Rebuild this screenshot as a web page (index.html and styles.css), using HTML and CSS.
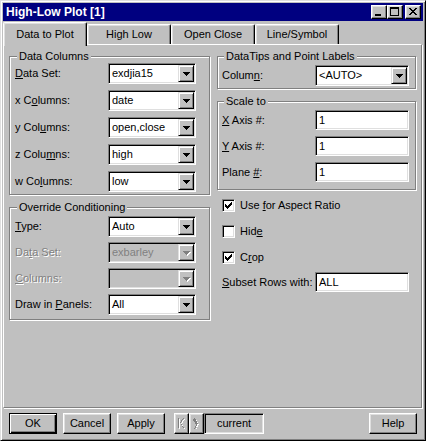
FILE: index.html
```html
<!DOCTYPE html>
<html>
<head>
<meta charset="utf-8">
<title>High-Low Plot [1]</title>
<link rel="stylesheet" href="styles.css">
</head>
<body>
<div class="window">
  <div class="titlebar">
    <span class="title">High-Low Plot [1]</span>
    <div class="caption-btns">
      <span class="cbtn"><svg width="14" height="12" viewBox="0 0 14 12"><rect x="3" y="8" width="6" height="2" fill="#000"/></svg></span>
      <span class="cbtn"><svg width="14" height="12" viewBox="0 0 14 12" shape-rendering="crispEdges"><rect x="2" y="1" width="9" height="2" fill="#000"/><rect x="2" y="1" width="1" height="9" fill="#000"/><rect x="10" y="1" width="1" height="9" fill="#000"/><rect x="2" y="9" width="9" height="1" fill="#000"/></svg></span>
      <span class="cbtn close"><svg width="14" height="12" viewBox="0 0 14 12" shape-rendering="crispEdges"><path fill="#000" d="M3 2h2v1h1v1h2v-1h1v-1h2v1h-1v1h-1v1h-1v1h1v1h1v1h1v1h-2v-1h-1v-1h-2v1h-1v1h-2v-1h1v-1h1v-1h1v-1h-1v-1h-1v-1h-1z"/></svg></span>
    </div>
  </div>

  <div class="tabs">
    <div class="tab active">Data to Plot</div>
    <div class="tab">High Low</div>
    <div class="tab">Open Close</div>
    <div class="tab">Line/Symbol</div>
  </div>

  <div class="panel">
    <div class="col col-left">
      <fieldset class="group g-data">
        <legend>Data Columns</legend>
        <div class="grid grid-data">
          <label><u>D</u>ata Set:</label>
          <div class="combo"><span class="val">exdjia15</span><span class="arrow"><svg width="7" height="4" viewBox="0 0 7 4" shape-rendering="crispEdges"><path fill="#000" d="M0 0h7v1h-1v1h-1v1h-1v1h-1v-1h-1v-1h-1v-1h-1z"/></svg></span></div>
          <label>x C<u>o</u>lumns:</label>
          <div class="combo"><span class="val">date</span><span class="arrow"><svg width="7" height="4" viewBox="0 0 7 4" shape-rendering="crispEdges"><path fill="#000" d="M0 0h7v1h-1v1h-1v1h-1v1h-1v-1h-1v-1h-1v-1h-1z"/></svg></span></div>
          <label>y Col<u>u</u>mns:</label>
          <div class="combo"><span class="val">open,close</span><span class="arrow"><svg width="7" height="4" viewBox="0 0 7 4" shape-rendering="crispEdges"><path fill="#000" d="M0 0h7v1h-1v1h-1v1h-1v1h-1v-1h-1v-1h-1v-1h-1z"/></svg></span></div>
          <label>z Colu<u>m</u>ns:</label>
          <div class="combo"><span class="val">high</span><span class="arrow"><svg width="7" height="4" viewBox="0 0 7 4" shape-rendering="crispEdges"><path fill="#000" d="M0 0h7v1h-1v1h-1v1h-1v1h-1v-1h-1v-1h-1v-1h-1z"/></svg></span></div>
          <label>w Co<u>l</u>umns:</label>
          <div class="combo"><span class="val">low</span><span class="arrow"><svg width="7" height="4" viewBox="0 0 7 4" shape-rendering="crispEdges"><path fill="#000" d="M0 0h7v1h-1v1h-1v1h-1v1h-1v-1h-1v-1h-1v-1h-1z"/></svg></span></div>
        </div>
      </fieldset>

      <fieldset class="group g-override">
        <legend>Override Conditioning</legend>
        <div class="grid grid-override">
          <label><u>T</u>ype:</label>
          <div class="combo"><span class="val">Auto</span><span class="arrow"><svg width="7" height="4" viewBox="0 0 7 4" shape-rendering="crispEdges"><path fill="#000" d="M0 0h7v1h-1v1h-1v1h-1v1h-1v-1h-1v-1h-1v-1h-1z"/></svg></span></div>
          <label class="disabled">Da<u>t</u>a Set:</label>
          <div class="combo is-disabled"><span class="val">exbarley</span><span class="arrow"><svg width="8" height="5" viewBox="0 0 8 5" shape-rendering="crispEdges"><path fill="#fff" d="M1 1h7v1h-1v1h-1v1h-1v1h-1v-1h-1v-1h-1v-1h-1z"/><path fill="#808080" d="M0 0h7v1h-1v1h-1v1h-1v1h-1v-1h-1v-1h-1v-1h-1z"/></svg></span></div>
          <label class="disabled"><u>C</u>olumns:</label>
          <div class="combo is-disabled"><span class="val"></span><span class="arrow"><svg width="8" height="5" viewBox="0 0 8 5" shape-rendering="crispEdges"><path fill="#fff" d="M1 1h7v1h-1v1h-1v1h-1v1h-1v-1h-1v-1h-1v-1h-1z"/><path fill="#808080" d="M0 0h7v1h-1v1h-1v1h-1v1h-1v-1h-1v-1h-1v-1h-1z"/></svg></span></div>
          <label>Draw in <u>P</u>anels:</label>
          <div class="combo"><span class="val">All</span><span class="arrow"><svg width="7" height="4" viewBox="0 0 7 4" shape-rendering="crispEdges"><path fill="#000" d="M0 0h7v1h-1v1h-1v1h-1v1h-1v-1h-1v-1h-1v-1h-1z"/></svg></span></div>
        </div>
      </fieldset>
    </div>

    <div class="col col-right">
      <fieldset class="group g-tips">
        <legend>DataTips and Point Labels</legend>
        <div class="grid grid-right">
          <label>Colum<u>n</u>:</label>
          <div class="combo combo-wide"><span class="val">&lt;AUTO&gt;</span><span class="arrow"><svg width="7" height="4" viewBox="0 0 7 4" shape-rendering="crispEdges"><path fill="#000" d="M0 0h7v1h-1v1h-1v1h-1v1h-1v-1h-1v-1h-1v-1h-1z"/></svg></span></div>
        </div>
      </fieldset>

      <fieldset class="group g-scale">
        <legend>Scale to</legend>
        <div class="grid grid-right grid-scale">
          <label><u>X</u> Axis #:</label>
          <div class="field">1</div>
          <label><u>Y</u> Axis #:</label>
          <div class="field">1</div>
          <label>Plane <u>#</u>:</label>
          <div class="field">1</div>
        </div>
      </fieldset>

      <div class="checks">
        <div class="check-row">
          <span class="checkbox"><svg width="7" height="7" viewBox="0 0 7 7" shape-rendering="crispEdges"><path fill="#000" d="M6 0h1v3h-1v1h-1v1h-1v1h-1v1h-1v-1h-1v-1h-1v-3h1v1h1v1h1v-1h1v-1h1v-1h1z"/></svg></span>
          <span>Use <u>f</u>or Aspect Ratio</span>
        </div>
        <div class="check-row">
          <span class="checkbox"></span>
          <span>Hid<u>e</u></span>
        </div>
        <div class="check-row">
          <span class="checkbox"><svg width="7" height="7" viewBox="0 0 7 7" shape-rendering="crispEdges"><path fill="#000" d="M6 0h1v3h-1v1h-1v1h-1v1h-1v1h-1v-1h-1v-1h-1v-3h1v1h1v1h1v-1h1v-1h1v-1h1z"/></svg></span>
          <span>C<u>r</u>op</span>
        </div>
      </div>

      <div class="grid grid-subset">
        <label><u>S</u>ubset Rows with:</label>
        <div class="field">ALL</div>
      </div>
    </div>
  </div>

  <div class="footer">
    <button class="btn default">OK</button>
    <button class="btn">Cancel</button>
    <button class="btn">Apply</button>
    <div class="nav">
      <span class="navbtn"><svg width="9" height="11" viewBox="0 0 9 11" shape-rendering="crispEdges"><path fill="#fff" d="M2 1h1v10h-1zM7 1h1v1h-1v1h-1v2h-1v2h1v2h1v1h1v1h-1v-1h-1v-2h-1v-2h-1v-1h1v-2h1v-1h1z"/><path fill="#808080" d="M1 0h1v10h-1zM6 0h1v1h-1v1h-1v2h-1v2h1v2h1v1h1v1h-1v-1h-1v-2h-1v-2h-1v-1h1v-2h1v-1h1z"/></svg></span>
      <span class="navbtn"><svg width="7" height="11" viewBox="0 0 7 11" shape-rendering="crispEdges"><path fill="#fff" d="M2 1h1v1h1v2h1v2h1v1h-1v2h-1v2h-1v-1h1v-1h-1v-2h1v-2h-1v-2h-1z"/><path fill="#808080" d="M1 0h1v1h1v2h1v2h1v1h-1v2h-1v2h-1v1h-1v-1h1v-2h1v-2h-1v-2h-1v-1h-1z"/></svg></span>
      <span class="current">current</span>
    </div>
    <button class="btn help">Help</button>
  </div>
</div>
</body>
</html>
```

FILE: styles.css
```css
* {
  box-sizing: border-box;
}

html, body {
  margin: 0;
  background: #c0c0c0;
}

body {
  font-family: "Liberation Sans", Arial, sans-serif;
  font-size: 11px;
  line-height: 13px;
  color: #000;
}

svg {
  display: block;
}

.window {
  width: 426px;
  height: 441px;
  background: #c0c0c0;
  border: 1px solid;
  border-color: #dfdfdf #000 #000 #dfdfdf;
  box-shadow: inset 1px 1px #fff, inset -1px -1px #808080;
  padding: 2px;
  overflow: hidden;
}

/* Title bar */
.titlebar {
  height: 18px;
  background: #000080;
  color: #fff;
  display: flex;
  align-items: center;
  padding: 0 2px 0 3px;
}

.title {
  font-weight: bold;
  font-size: 12px;
  flex: 1;
}

.caption-btns {
  display: flex;
}

.cbtn {
  width: 16px;
  height: 14px;
  background: #c0c0c0;
  border: 1px solid;
  border-color: #fff #000 #000 #fff;
  box-shadow: inset -1px -1px #808080, inset 1px 1px #dfdfdf;
  display: block;
}

.cbtn.close {
  margin-left: 2px;
}

/* Tabs */
.tabs {
  display: flex;
  align-items: flex-end;
  height: 23px;
}

.tab {
  width: 84px;
  height: 20px;
  border-top: 1px solid #fff;
  border-left: 1px solid #fff;
  border-right: 1px solid #000;
  border-radius: 2px 2px 0 0;
  box-shadow: inset -1px 0 #808080, inset 1px 1px #dfdfdf;
  display: flex;
  align-items: center;
  justify-content: center;
  padding-bottom: 1px;
  background: #c0c0c0;
}

.tab.active {
  height: 24px;
  margin-bottom: -2px;
  padding-bottom: 1px;
  position: relative;
  z-index: 2;
}

/* Panel */
.panel {
  height: 364px;
  width: 419px;
  border: 1px solid;
  border-color: #fff #808080 #808080 #fff;
  box-shadow: 1px 1px #fff;
  padding: 5px 5px 0 5px;
  display: flex;
  gap: 7px;
}

.col {
  display: flex;
  flex-direction: column;
}

.col-left {
  width: 201px;
}

.col-right {
  width: 199px;
}

/* Group boxes */
.group {
  margin: 0;
  min-width: 0;
  border: 1px solid #808080;
  box-shadow: inset 1px 1px #fff, 1px 1px #fff;
  padding: 0 0 2px 5px;
}

.group legend {
  padding: 0 2px;
  margin-left: 2px;
  line-height: 13px;
  background: #c0c0c0;
}

.grid {
  display: grid;
  align-items: center;
}

.grid-data {
  grid-template-columns: 93px 88px;
  row-gap: 6px;
}

.g-override {
  margin-top: 6px;
  padding-bottom: 4px;
}

.grid-override {
  grid-template-columns: 93px 88px;
  row-gap: 5px;
  padding-top: 2px;
}

.g-tips,
.g-scale {
  padding-left: 4px;
}

.g-tips {
  padding-bottom: 2px;
}

.grid-right {
  grid-template-columns: 93px 94px;
  padding-top: 2px;
}

.g-scale {
  margin-top: 6px;
  padding-bottom: 7px;
}

.grid-scale {
  row-gap: 6px;
}

label {
  white-space: nowrap;
}

.disabled {
  color: #808080;
  text-shadow: 1px 1px #fff;
}

/* Combo box */
.combo {
  width: 88px;
  height: 21px;
  background: #fff;
  border: 1px solid;
  border-color: #808080 #fff #fff #808080;
  box-shadow: inset 1px 1px #000, inset -1px -1px #dfdfdf;
  padding: 1px;
  display: flex;
}

.combo-wide {
  width: 94px;
}

.combo .val {
  flex: 1;
  padding-left: 2px;
  display: flex;
  align-items: center;
  white-space: nowrap;
}

.combo .arrow {
  width: 16px;
  height: 17px;
  background: #c0c0c0;
  border: 1px solid;
  border-color: #dfdfdf #000 #000 #dfdfdf;
  box-shadow: inset 1px 1px #fff, inset -1px -1px #808080;
  display: flex;
  align-items: center;
  justify-content: center;
}

.combo.is-disabled {
  background: #c0c0c0;
}

.combo.is-disabled .val {
  color: #808080;
}

.combo.is-disabled .arrow svg {
  margin-left: 1px;
  margin-top: 1px;
}

/* Text field */
.field {
  width: 94px;
  height: 20px;
  background: #fff;
  border: 1px solid;
  border-color: #808080 #fff #fff #808080;
  box-shadow: inset 1px 1px #000, inset -1px -1px #dfdfdf;
  padding-left: 3px;
  display: flex;
  align-items: center;
}

/* Checkboxes */
.checks {
  margin-top: 9px;
  padding-left: 5px;
  display: flex;
  flex-direction: column;
  gap: 13px;
}

.check-row {
  display: flex;
  align-items: center;
  gap: 5px;
  height: 13px;
}

.checkbox {
  width: 13px;
  height: 13px;
  background: #fff;
  border: 1px solid;
  border-color: #808080 #fff #fff #808080;
  box-shadow: inset 1px 1px #000, inset -1px -1px #dfdfdf;
  display: flex;
  align-items: center;
  justify-content: center;
}

.grid-subset {
  grid-template-columns: 93px 94px;
  margin-top: 8px;
  padding-left: 5px;
}

/* Footer */
.footer {
  display: flex;
  align-items: center;
  margin-top: 5px;
  padding: 0 6px 0 6px;
  gap: 6px;
}

.btn {
  font: inherit;
  color: #000;
  width: 48px;
  height: 21px;
  background: #c0c0c0;
  border: 1px solid;
  border-color: #fff #000 #000 #fff;
  box-shadow: inset -1px -1px #808080, inset 1px 1px #dfdfdf;
  padding: 0;
  margin: 0;
}

.btn.default {
  border: 1px solid #000;
  box-shadow: inset 1px 1px #fff, inset -1px -1px #000, inset -2px -2px #808080;
}

.btn.help {
  margin-left: auto;
}

.nav {
  display: flex;
  margin-left: 3px;
}

.navbtn {
  width: 15px;
  height: 21px;
  background: #c0c0c0;
  border: 1px solid;
  border-color: #fff #000 #000 #fff;
  box-shadow: inset -1px -1px #808080, inset 1px 1px #dfdfdf;
  display: flex;
  align-items: center;
  justify-content: center;
}

.current {
  width: 60px;
  height: 21px;
  border: 1px solid;
  border-color: #808080 #fff #fff #808080;
  box-shadow: inset 1px 1px #000, inset -1px -1px #dfdfdf;
  display: flex;
  align-items: center;
  justify-content: center;
}
```
